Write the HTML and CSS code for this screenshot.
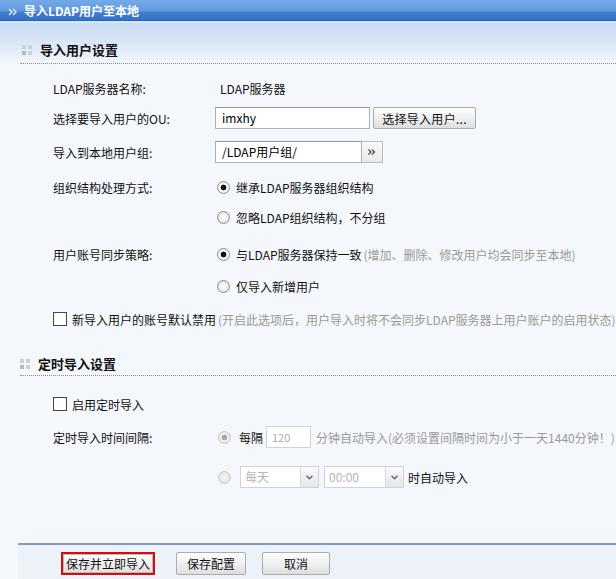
FILE: index.html
```html
<!DOCTYPE html>
<html lang="zh-CN">
<head>
<meta charset="utf-8">
<title>导入LDAP用户至本地</title>
<link rel="stylesheet" href="styles.css">
</head>
<body>
<div class="titlebar">
  <svg class="titlebar-icon" width="10" height="8" viewBox="0 0 10 8"><path d="M1 1l3 3-3 3M5 1l3 3-3 3" fill="none" stroke="#dfeeff" stroke-width="1.4"/></svg>
  <span class="titlebar-text">导入LDAP用户至本地</span>
</div>
<div class="hero">
  <div class="section-head">
    <span class="grip"><i></i><i></i><i></i><i></i></span>
    <h2 class="section-title">导入用户设置</h2>
  </div>
</div>
<div class="form">
  <div class="row">
    <span class="label">LDAP服务器名称:</span>
    <span class="value text-pad">LDAP服务器</span>
  </div>
  <div class="row">
    <span class="label">选择要导入用户的OU:</span>
    <span class="value">
      <span class="input ou-input">imxhy</span>
      <span class="btn pick-btn">选择导入用户...</span>
    </span>
  </div>
  <div class="row mt-4">
    <span class="label">导入到本地用户组:</span>
    <span class="value">
      <span class="input group-input">/LDAP用户组/</span>
      <span class="more-btn"><svg width="8" height="6" viewBox="0 0 8 6"><path d="M0.5 0.5l2.5 2.5-2.5 2.5M4 0.5l2.5 2.5-2.5 2.5" fill="none" stroke="#444" stroke-width="1.2"/></svg></span>
    </span>
  </div>
  <div class="row mt-5">
    <span class="label">组织结构处理方式:</span>
    <span class="value"><span class="radio checked"></span>继承LDAP服务器组织结构</span>
  </div>
  <div class="row">
    <span class="label"></span>
    <span class="value"><span class="radio"></span>忽略LDAP组织结构，不分组</span>
  </div>
  <div class="row mt-7">
    <span class="label">用户账号同步策略:</span>
    <span class="value"><span class="radio checked"></span>与LDAP服务器保持一致<span class="hint">(增加、删除、修改用户均会同步至本地)</span></span>
  </div>
  <div class="row mt-2">
    <span class="label"></span>
    <span class="value"><span class="radio"></span>仅导入新增用户</span>
  </div>
  <div class="row mt-3">
    <span class="check"></span><span class="check-text">新导入用户的账号默认禁用</span><span class="hint">(开启此选项后，用户导入时将不会同步LDAP服务器上用户账户的启用状态)</span>
  </div>
</div>
<div class="section-head second">
  <span class="grip"><i></i><i></i><i></i><i></i></span>
  <h2 class="section-title">定时导入设置</h2>
</div>
<div class="form form-second">
  <div class="row">
    <span class="check"></span><span class="check-text">启用定时导入</span>
  </div>
  <div class="row mt-3">
    <span class="label">定时导入时间间隔:</span>
    <span class="value">
      <span class="radio checked disabled"></span><span class="muted-label">每隔</span><span class="input small-input">120</span><span class="hint-plain">分钟自动导入(必须设置间隔时间为小于一天1440分钟！)</span>
    </span>
  </div>
  <div class="row mt-10">
    <span class="label"></span>
    <span class="value">
      <span class="radio disabled"></span>
      <span class="select day-select"><span class="select-text">每天</span><span class="select-arrow"><svg width="7" height="5" viewBox="0 0 7 5"><path d="M0.5 0.8l3 3 3-3" fill="none" stroke="#4d6b97" stroke-width="1.5"/></svg></span></span>
      <span class="select time-select"><span class="select-text">00:00</span><span class="select-arrow"><svg width="7" height="5" viewBox="0 0 7 5"><path d="M0.5 0.8l3 3 3-3" fill="none" stroke="#4d6b97" stroke-width="1.5"/></svg></span></span>
      <span class="after-select">时自动导入</span>
    </span>
  </div>
</div>
<div class="footer">
  <span class="btn footer-btn primary">保存并立即导入</span>
  <span class="btn footer-btn save">保存配置</span>
  <span class="btn footer-btn cancel">取消</span>
</div>
</body>
</html>
```
FILE: styles.css
```css
html, body {
  margin: 0;
  padding: 0;
}
body {
  width: 616px;
  height: 579px;
  overflow: hidden;
  background: #f4f7fb;
  font-family: "Noto Sans CJK SC", "DejaVu Sans", sans-serif;
  font-size: 12px;
  color: #111;
  display: flex;
  flex-direction: column;
  white-space: nowrap;
}
.titlebar {
  height: 23px;
  flex: none;
  display: flex;
  align-items: center;
  padding-bottom: 2px;
  box-sizing: border-box;
  background: linear-gradient(to bottom, #74aae9 0, #6199de 11px, #417dd0 12px, #3570c4 20px, #2c61ad 20px, #2c61ad 21px, #c8ecfb 21px, #c8ecfb 23px);
}
.titlebar-icon {
  margin-left: 8px;
  margin-right: 6px;
  margin-top: 2px;
}
.titlebar-text {
  color: #fff;
  font-weight: bold;
  font-size: 12px;
  line-height: 16px;
}
.hero {
  flex: none;
  padding-left: 20px;
  background: linear-gradient(to bottom, #c9dcf4 0, #d8e5f6 18px, #f2f6fb 40px);
}
.section-head {
  display: flex;
  align-items: center;
  padding: 19px 0 5px 2px;
  border-bottom: 1px dotted #8a8a8a;
  flex: none;
}
.section-head.second {
  margin: 3px 0 0 20px;
  padding-left: 0;
  padding-bottom: 3px;
}
.grip {
  display: grid;
  grid-template-columns: 4px 4px;
  grid-template-rows: 4px 4px;
  gap: 2px;
  margin-right: 8px;
}
.grip i {
  display: block;
  background: #cdd1d6;
}
.grip i:nth-child(3) {
  background: #b6bbc1;
}
.section-title {
  margin: 0;
  font-size: 13px;
  line-height: 16px;
  font-weight: bold;
  color: #111;
}
.form {
  padding: 9px 0 0 53px;
  flex: none;
}
.form-second {
  padding-top: 13px;
}
.row {
  height: 30px;
  display: flex;
  align-items: center;
}
.mt-2 { margin-top: 2px; }
.mt-3 { margin-top: 3px; }
.mt-4 { margin-top: 4px; }
.mt-5 { margin-top: 5px; }
.mt-7 { margin-top: 7px; }
.mt-10 { margin-top: 10px; }
.label {
  width: 162px;
  flex: none;
  color: #111;
}
.value {
  display: flex;
  align-items: center;
}
.text-pad {
  padding-left: 5px;
}
.input {
  box-sizing: border-box;
  height: 22px;
  line-height: 20px;
  border: 1px solid #a9b0b9;
  border-top-color: #8f969f;
  background: #fff;
  padding-left: 6px;
  color: #000;
}
.ou-input {
  width: 155px;
}
.group-input {
  width: 147px;
}
.more-btn {
  box-sizing: border-box;
  width: 21px;
  height: 22px;
  border: 1px solid #b9bec5;
  border-left: none;
  background: linear-gradient(#fafafa, #e9e9e9);
  display: flex;
  align-items: center;
  justify-content: center;
}
.btn {
  box-sizing: border-box;
  display: inline-flex;
  align-items: center;
  justify-content: center;
  height: 22px;
  border: 1px solid #a9adb3;
  border-radius: 2px;
  background: linear-gradient(to bottom, #fdfdfd 0, #f0f0f0 50%, #dedede 100%);
  color: #111;
}
.pick-btn {
  width: 103px;
  margin-left: 3px;
  letter-spacing: 0.3px;
}
.radio {
  box-sizing: border-box;
  width: 13px;
  height: 13px;
  border-radius: 50%;
  border: 1px solid #8b8f95;
  background: radial-gradient(circle, #ffffff 0, #f4f4f4 3px, #dcdcdc 6px);
  margin: 0 6px 0 2px;
  flex: none;
}
.radio.checked {
  background: radial-gradient(circle, #111 0, #111 2.6px, #fafafa 3.2px, #e9e9e9 6px);
}
.radio.disabled {
  border-color: #c7c9cc;
  background: radial-gradient(circle, #f6f6f6 0, #e2e2e2 6px);
  margin-left: 3px;
}
.radio.checked.disabled {
  background: radial-gradient(circle, #a9a9a9 0, #a9a9a9 2.6px, #f3f3f3 3.2px, #e2e2e2 6px);
}
.hint {
  color: #9a9a9a;
  margin-left: 2px;
}
.check {
  box-sizing: border-box;
  width: 14px;
  height: 14px;
  border: 1px solid #444;
  background: #fff;
  margin-right: 5px;
  flex: none;
}
.check-text {
  color: #111;
}
.muted-label {
  color: #111;
  margin-left: 2px;
}
.small-input {
  width: 45px;
  color: #aaa;
  border-color: #cfd3d8;
  margin-left: 3px;
  padding-left: 5px;
  font-size: 11px;
}
.hint-plain {
  color: #9a9a9a;
  margin-left: 5px;
}
.select {
  box-sizing: border-box;
  height: 22px;
  border: 1px solid #cfd3d8;
  background: #fff;
  display: flex;
  align-items: stretch;
}
.day-select {
  width: 79px;
  margin-left: 3px;
}
.time-select {
  width: 80px;
  margin-left: 5px;
}
.select-text {
  flex: 1;
  color: #b5b5b5;
  padding-left: 4px;
  line-height: 20px;
}
.select-arrow {
  width: 17px;
  border-left: 1px solid #d6d9dd;
  background: linear-gradient(#fbfbfb, #e6e6e6);
  display: flex;
  align-items: center;
  justify-content: center;
}
.after-select {
  margin-left: 4px;
  color: #111;
}
.footer {
  margin-top: auto;
  margin-left: 18px;
  height: 36px;
  box-sizing: border-box;
  border-top: 2px solid #7f9bc6;
  background: #edf2f9;
  display: flex;
  align-items: flex-start;
  padding: 7px 0 0 43px;
  flex: none;
}
.footer-btn {
  height: 23px;
}
.footer-btn.primary {
  width: 94px;
  border: 2px solid #d10f0f;
  border-radius: 0;
  box-shadow: inset 0 0 0 1px #b9b9b9;
}
.footer-btn.save {
  width: 70px;
  margin-left: 21px;
}
.footer-btn.cancel {
  width: 68px;
  margin-left: 16px;
}
```
